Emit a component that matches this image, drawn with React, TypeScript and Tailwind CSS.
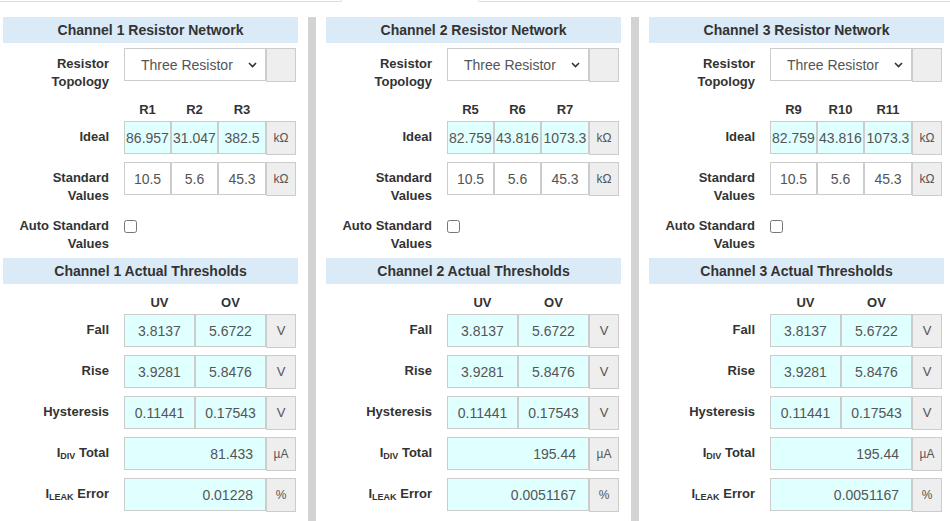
import React from "react";

type ChannelData = {
  num: number;
  rNames: string[];
  ideal: string[];
  standard: string[];
  fall: string[];
  rise: string[];
  hyst: string[];
  idiv: string;
  ileak: string;
};

const channels: ChannelData[] = [
  {
    num: 1,
    rNames: ["R1", "R2", "R3"],
    ideal: ["86.957", "31.047", "382.5"],
    standard: ["10.5", "5.6", "45.3"],
    fall: ["3.8137", "5.6722"],
    rise: ["3.9281", "5.8476"],
    hyst: ["0.11441", "0.17543"],
    idiv: "81.433",
    ileak: "0.01228",
  },
  {
    num: 2,
    rNames: ["R5", "R6", "R7"],
    ideal: ["82.759", "43.816", "1073.3"],
    standard: ["10.5", "5.6", "45.3"],
    fall: ["3.8137", "5.6722"],
    rise: ["3.9281", "5.8476"],
    hyst: ["0.11441", "0.17543"],
    idiv: "195.44",
    ileak: "0.0051167",
  },
  {
    num: 3,
    rNames: ["R9", "R10", "R11"],
    ideal: ["82.759", "43.816", "1073.3"],
    standard: ["10.5", "5.6", "45.3"],
    fall: ["3.8137", "5.6722"],
    rise: ["3.9281", "5.8476"],
    hyst: ["0.11441", "0.17543"],
    idiv: "195.44",
    ileak: "0.0051167",
  },
];

const labelCls =
  "w-[121px] shrink-0 pr-[15px] pt-[7px] text-right text-[13px] leading-[18px] font-bold text-[#333]";

const boxCls =
  "h-[33px] border border-[#ccc] flex items-center pt-[1px] text-[14px] text-[#555] overflow-hidden whitespace-nowrap";

const Addon = ({ children, small = true }: { children?: React.ReactNode; small?: boolean }) => (
  <div
    className={`h-[34px] w-[30px] shrink-0 border border-[#ccc] bg-[#eee] flex items-center justify-center text-[#555] ${
      small ? "text-[12px]" : "text-[13px]"
    }`}
  >
    {children}
  </div>
);

const Header = ({ title }: { title: string }) => (
  <div className="h-[26px] bg-[#daeaf7] flex items-center justify-center text-[14px] font-bold text-[#333]">
    {title}
  </div>
);

const Channel = ({ d }: { d: ChannelData }) => {
  return (
    <div className="w-[295px] shrink-0">
      <Header title={`Channel ${d.num} Resistor Network`} />

      {/* topology */}
      <div className="flex h-[33px] mt-[5px]">
        <div className={labelCls}>
          Resistor
          <br />
          Topology
        </div>
        <div className="flex">
          <div className="relative w-[142px] h-[33px]">
            <select
              className="appearance-none w-full h-full border border-[#ccc] bg-white pl-[16px] pt-[2px] text-[14px] text-[#555] outline-none"
              defaultValue="three"
            >
              <option value="three">Three Resistor</option>
              <option value="two">Two Resistor</option>
            </select>
            <svg
              className="absolute right-[9px] top-[14px] pointer-events-none"
              width="9"
              height="6"
              viewBox="0 0 9 6"
            >
              <path d="M1 1l3.5 3.5L8 1" fill="none" stroke="#333" strokeWidth="1.6" />
            </svg>
          </div>
          <Addon />
        </div>
      </div>

      {/* R names */}
      <div className="flex h-[40px]">
        <div className="w-[121px] shrink-0" />
        {d.rNames.map((r, i) => (
          <div
            key={r}
            className={`${i === 2 ? "w-[48px]" : "w-[47px]"} pt-[20px] text-center text-[13px] leading-[18px] font-bold text-[#333]`}
          >
            {r}
          </div>
        ))}
      </div>

      {/* ideal */}
      <div className="flex h-[41px]">
        <div className={labelCls}>Ideal</div>
        <div className="flex items-start">
          {d.ideal.map((v, i) => (
            <div
              key={i}
              className={`${boxCls} ${i === 2 ? "w-[48px]" : "w-[47px]"} justify-center bg-[#e0ffff]`}
            >
              {v}
            </div>
          ))}
          <Addon>kΩ</Addon>
        </div>
      </div>

      {/* standard */}
      <div className="flex h-[48px]">
        <div className={labelCls}>
          Standard
          <br />
          Values
        </div>
        <div className="flex items-start">
          {d.standard.map((v, i) => (
            <div
              key={i}
              className={`${boxCls} ${i === 2 ? "w-[48px]" : "w-[47px]"} justify-center bg-white`}
            >
              {v}
            </div>
          ))}
          <Addon>kΩ</Addon>
        </div>
      </div>

      {/* auto */}
      <div className="flex h-[48px]">
        <div className={labelCls}>
          Auto Standard
          <br />
          Values
        </div>
        <div className="pt-[6px]">
          <input type="checkbox" className="w-[13px] h-[13px] m-0" />
        </div>
      </div>

      <Header title={`Channel ${d.num} Actual Thresholds`} />

      <div className="flex h-[30px]">
        <div className="w-[121px] shrink-0" />
        <div className="w-[71px] pt-[10px] text-center text-[13px] leading-[18px] font-bold text-[#333]">UV</div>
        <div className="w-[71px] pt-[10px] text-center text-[13px] leading-[18px] font-bold text-[#333]">OV</div>
      </div>

      {[
        ["Fall", d.fall],
        ["Rise", d.rise],
        ["Hysteresis", d.hyst],
      ].map(([label, vals]) => (
        <div key={label as string} className="flex h-[41px]">
          <div className={labelCls}>{label as string}</div>
          <div className="flex items-start">
            {(vals as string[]).map((v, i) => (
              <div key={i} className={`${boxCls} w-[71px] justify-center bg-[#e0ffff]`}>
                {v}
              </div>
            ))}
            <Addon small={false}>V</Addon>
          </div>
        </div>
      ))}

      <div className="flex h-[41px]">
        <div className={labelCls}>
          I<sub className="text-[9px]">DIV</sub> Total
        </div>
        <div className="flex items-start">
          <div className={`${boxCls} w-[142px] justify-end pr-[12px] bg-[#e0ffff]`}>{d.idiv}</div>
          <Addon>µA</Addon>
        </div>
      </div>

      <div className="flex h-[41px]">
        <div className={labelCls}>
          I<sub className="text-[9px]">LEAK</sub> Error
        </div>
        <div className="flex items-start">
          <div className={`${boxCls} w-[142px] justify-end pr-[12px] bg-[#e0ffff]`}>{d.ileak}</div>
          <Addon>%</Addon>
        </div>
      </div>
    </div>
  );
};

const App = () => {
  return (
    <div className="w-[950px] h-[521px] overflow-hidden bg-white font-['Liberation_Sans',Arial,sans-serif]">
      {/* tab strip */}
      <div className="flex h-[2px]">
        <div className="w-[341px] border-b border-[#ddd]" />
        <div className="w-[138px] border-x border-[#ddd] rounded-b-[2px]" />
        <div className="flex-1 border-b border-[#ddd]" />
      </div>

      <div className="flex pl-[3px] mt-[15px] min-h-[520px]">
        <Channel d={channels[0]} />
        <div className="w-[8px] mx-[10px] bg-[#d3d3d3] shrink-0" />
        <Channel d={channels[1]} />
        <div className="w-[8px] mx-[10px] bg-[#d3d3d3] shrink-0" />
        <Channel d={channels[2]} />
      </div>
    </div>
  );
};

export default App;
